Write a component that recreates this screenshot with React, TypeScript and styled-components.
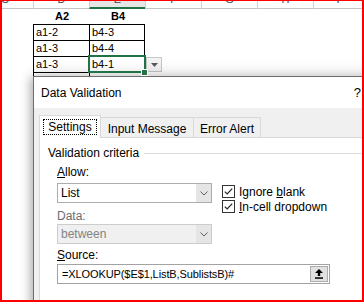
import React from 'react'
import styled, { createGlobalStyle } from 'styled-components'

const GlobalStyle = createGlobalStyle`
  html, body {
    margin: 0;
    padding: 0;
    background: #ffffff;
  }
  body {
    font-family: 'Liberation Sans', Arial, sans-serif;
  }
  * {
    box-sizing: border-box;
  }
`

const COLS = '31px 56px 56px 56px 56px 56px 1fr'

const Frame = styled.div`
  position: relative;
  width: 364px;
  height: 302px;
  overflow: hidden;
  border: 2px solid #ff0000;
  border-top-width: 1px;
  background: #ffffff;
`

const Sheet = styled.div`
  display: flex;
  flex-direction: column;
  font-size: 11px;
  color: #000;
`

const HeaderRow = styled.div`
  display: grid;
  grid-template-columns: ${COLS};
  height: 8px;
`

const HeaderCell = styled.div<{ $sel?: boolean; $first?: boolean }>`
  overflow: hidden;
  text-align: center;
  color: #444;
  border-left: ${(p) => (p.$first ? 'none' : '1px solid #d0d0d0')};
  border-bottom: ${(p) => (p.$sel ? '2px solid #217346' : '1px solid #c4c4c4')};
  background: ${(p) => (p.$sel ? '#e6e6e6' : '#ffffff')};
  span {
    display: block;
    line-height: 12px;
    margin-top: -8px;
    /* the first column is cut by the window edge, so centre it on its full width */
    width: ${(p) => (p.$first ? '56px' : 'auto')};
    margin-left: ${(p) => (p.$first ? '-25px' : '0')};
  }
`

const Row = styled.div<{ $h: number }>`
  display: grid;
  grid-template-columns: ${COLS};
  height: ${(p) => p.$h}px;
`

const Cell = styled.div<{ $boxed?: boolean; $last?: boolean; $title?: boolean; $sel?: boolean; $bare?: boolean }>`
  position: relative;
  line-height: 15px;
  padding-left: ${(p) => (p.$bare ? 0 : 2)}px;
  white-space: nowrap;
  border-top: ${(p) => (p.$boxed ? '1px solid #000' : 'none')};
  border-left: ${(p) => (p.$boxed ? '1px solid #000' : 'none')};
  border-right: ${(p) => (p.$last ? '1px solid #000' : 'none')};
  font-weight: ${(p) => (p.$title ? 700 : 400)};
  text-align: ${(p) => (p.$title ? 'center' : 'left')};
  ${(p) =>
    p.$sel &&
    `
    z-index: 1;
    outline: 2px solid #217346;
    outline-offset: -1px;
    &::after {
      content: '';
      position: absolute;
      right: -4px;
      bottom: -4px;
      width: 5px;
      height: 5px;
      background: #217346;
      border: 1px solid #fff;
    }
  `}
`

const ListButton = styled.div`
  width: 16px;
  height: 15px;
  margin: 1px 0 0 1px;
  border: 1px solid #c6c6c6;
  background: #f3f3f3;
  display: flex;
  align-items: center;
  justify-content: center;
`

/* ---------- dialog ---------- */

const Dialog = styled.div`
  position: absolute;
  left: 31px;
  top: 75px;
  width: 372px;
  height: 260px;
  border: 1px solid #6e6e6e;
  background: #f0f0f0;
  box-shadow: 0 -3px 14px rgba(0, 0, 0, 0.14), -3px 2px 8px rgba(0, 0, 0, 0.22);
  display: flex;
  flex-direction: column;
  font-size: 12px;
  color: #000;
`

const TitleBar = styled.div`
  height: 31px;
  background: #ffffff;
  display: flex;
  align-items: center;
  padding: 0 43px 0 7px;
`

const Title = styled.div`
  flex: 1;
`

const Help = styled.div`
  font-size: 13px;
`

const Body = styled.div`
  flex: 1;
  display: flex;
  flex-direction: column;
  padding: 7px 0 0 5px;
`

const Tabs = styled.div`
  display: flex;
  align-items: flex-end;
  height: 22px;
`

const Tab = styled.div<{ $active?: boolean; $w: number }>`
  position: relative;
  z-index: ${(p) => (p.$active ? 2 : 1)};
  width: ${(p) => p.$w}px;
  height: ${(p) => (p.$active ? 23 : 20)}px;
  margin-bottom: ${(p) => (p.$active ? -1 : 0)}px;
  margin-left: ${(p) => (p.$active ? 0 : -1)}px;
  border: 1px solid #d9d9d9;
  border-bottom: none;
  background: ${(p) => (p.$active ? '#ffffff' : '#f0f0f0')};
  padding: 3px 3px 0;
  display: flex;
  align-items: flex-start;
  justify-content: center;
  line-height: 16px;
  &:first-child {
    margin-left: 0;
  }
`

const Focus = styled.span`
  flex: 1;
  height: 16px;
  text-align: center;
  border: 1px dotted #000;
  line-height: 14px;
`

const Panel = styled.div`
  flex: 1;
  border: 1px solid #d9d9d9;
  border-right: none;
  background: #ffffff;
  padding: 8px 0 0 8px;
`

const Legend = styled.div`
  display: flex;
  align-items: center;
  height: 14px;
  &::after {
    content: '';
    flex: 1;
    height: 1px;
    margin-left: 5px;
    background: #dcdcdc;
  }
`

const Group = styled.div`
  padding: 5px 0 0 9px;
  display: flex;
  flex-direction: column;
`

const Criteria = styled.div`
  display: flex;
`

const Column = styled.div`
  display: flex;
  flex-direction: column;
`

const Label = styled.div<{ $muted?: boolean; $gap: number }>`
  height: 14px;
  line-height: 14px;
  margin-top: ${(p) => p.$gap}px;
  color: ${(p) => (p.$muted ? '#6d6d6d' : '#000')};
`

const Key = styled.span`
  text-decoration: underline;
  text-underline-offset: 1px;
`

const Combo = styled.div<{ $disabled?: boolean; $gap: number }>`
  width: 155px;
  height: 20px;
  margin-top: ${(p) => p.$gap}px;
  border: 1px solid ${(p) => (p.$disabled ? '#cccccc' : '#adadad')};
  background: ${(p) => (p.$disabled ? '#f0f0f0' : '#ffffff')};
  color: ${(p) => (p.$disabled ? '#838383' : '#000')};
  display: flex;
  align-items: center;
  padding-left: 3px;
`

const ComboText = styled.span`
  flex: 1;
`

const ComboButton = styled.div`
  width: 15px;
  height: 100%;
  background: #e5e5e5;
  display: flex;
  align-items: center;
  justify-content: center;
`

const Checks = styled.div`
  display: flex;
  flex-direction: column;
  margin-left: 10px;
  padding-top: 19px;
`

const CheckRow = styled.div`
  display: flex;
  align-items: center;
  height: 15px;
  gap: 4px;
`

const SourceBox = styled.div`
  width: 273px;
  height: 20px;
  margin-top: 2px;
  border: 1px solid #a3a3a3;
  background: #ffffff;
  display: flex;
  align-items: center;
  padding: 0 1px 0 4px;
  font-size: 11px;
`

const SourceText = styled.span`
  flex: 1;
  white-space: nowrap;
  overflow: hidden;
  letter-spacing: -0.1px;
`

const CollapseButton = styled.div`
  width: 18px;
  height: 16px;
  background: #e1e1e1;
  border: 1px solid #adadad;
  display: flex;
  align-items: center;
  justify-content: center;
`

const Chevron = () => (
  <svg width="8" height="5" viewBox="0 0 8 5">
    <path d="M0.5 0.5 L4 4 L7.5 0.5" fill="none" stroke="#606060" strokeWidth="1" />
  </svg>
)

const CheckBox = () => (
  <svg width="13" height="13" viewBox="0 0 13 13">
    <rect x="0.5" y="0.5" width="12" height="12" fill="#fff" stroke="#333" />
    <path d="M2.8 6.6 L5.2 9 L10.2 3.6" fill="none" stroke="#222" strokeWidth="1.2" />
  </svg>
)

const columns = ['C', 'D', 'E', 'F', 'G', 'H', 'I']
const rows = [
  ['a1-2', 'b4-3'],
  ['a1-3', 'b4-4'],
  ['a1-3', 'b4-1'],
  ['', ''],
]

export default function App() {
  return (
    <>
      <GlobalStyle />
      <Frame>
        <Sheet>
          <HeaderRow>
            {columns.map((c, i) => (
              <HeaderCell key={c} $first={i === 0} $sel={c === 'E'}>
                <span>{c}</span>
              </HeaderCell>
            ))}
          </HeaderRow>
          <Row $h={15}>
            <Cell />
            <Cell $title>A2</Cell>
            <Cell $title>B4</Cell>
          </Row>
          {rows.map((r, i) => (
            <Row $h={16} key={i}>
              <Cell />
              <Cell $boxed>{r[0]}</Cell>
              <Cell $boxed $last $sel={i === 2}>
                {r[1]}
              </Cell>
              <Cell $bare>
                {i === 2 && (
                  <ListButton>
                    <svg width="7" height="4" viewBox="0 0 7 4">
                      <polygon points="0,0 7,0 3.5,4" fill="#5a5a5a" />
                    </svg>
                  </ListButton>
                )}
              </Cell>
            </Row>
          ))}
        </Sheet>

        <Dialog>
          <TitleBar>
            <Title>Data Validation</Title>
            <Help>?</Help>
          </TitleBar>
          <Body>
            <Tabs>
              <Tab $active $w={62}>
                <Focus>Settings</Focus>
              </Tab>
              <Tab $w={94}>Input Message</Tab>
              <Tab $w={68}>Error Alert</Tab>
            </Tabs>
            <Panel>
              <Legend>Validation criteria</Legend>
              <Group>
                <Criteria>
                  <Column>
                    <Label $gap={0}>
                      <Key>A</Key>llow:
                    </Label>
                    <Combo $gap={4}>
                      <ComboText>List</ComboText>
                      <ComboButton>
                        <Chevron />
                      </ComboButton>
                    </Combo>
                    <Label $gap={6} $muted>
                      Data:
                    </Label>
                    <Combo $gap={1} $disabled>
                      <ComboText>between</ComboText>
                      <ComboButton>
                        <Chevron />
                      </ComboButton>
                    </Combo>
                  </Column>
                  <Checks>
                    <CheckRow>
                      <CheckBox />
                      <span>
                        Ignore <Key>b</Key>lank
                      </span>
                    </CheckRow>
                    <CheckRow>
                      <CheckBox />
                      <span>
                        <Key>I</Key>n-cell dropdown
                      </span>
                    </CheckRow>
                  </Checks>
                </Criteria>
                <Label $gap={4}>
                  <Key>S</Key>ource:
                </Label>
                <SourceBox>
                  <SourceText>=XLOOKUP($E$1,ListB,SublistsB)#</SourceText>
                  <CollapseButton>
                    <svg width="8" height="10" viewBox="0 0 8 10">
                      <polygon points="4,0 8,4 5.2,4 5.2,7 2.8,7 2.8,4 0,4" fill="#000" />
                      <rect x="0" y="8.3" width="8" height="1.5" fill="#000" />
                    </svg>
                  </CollapseButton>
                </SourceBox>
              </Group>
            </Panel>
          </Body>
        </Dialog>
      </Frame>
    </>
  )
}
